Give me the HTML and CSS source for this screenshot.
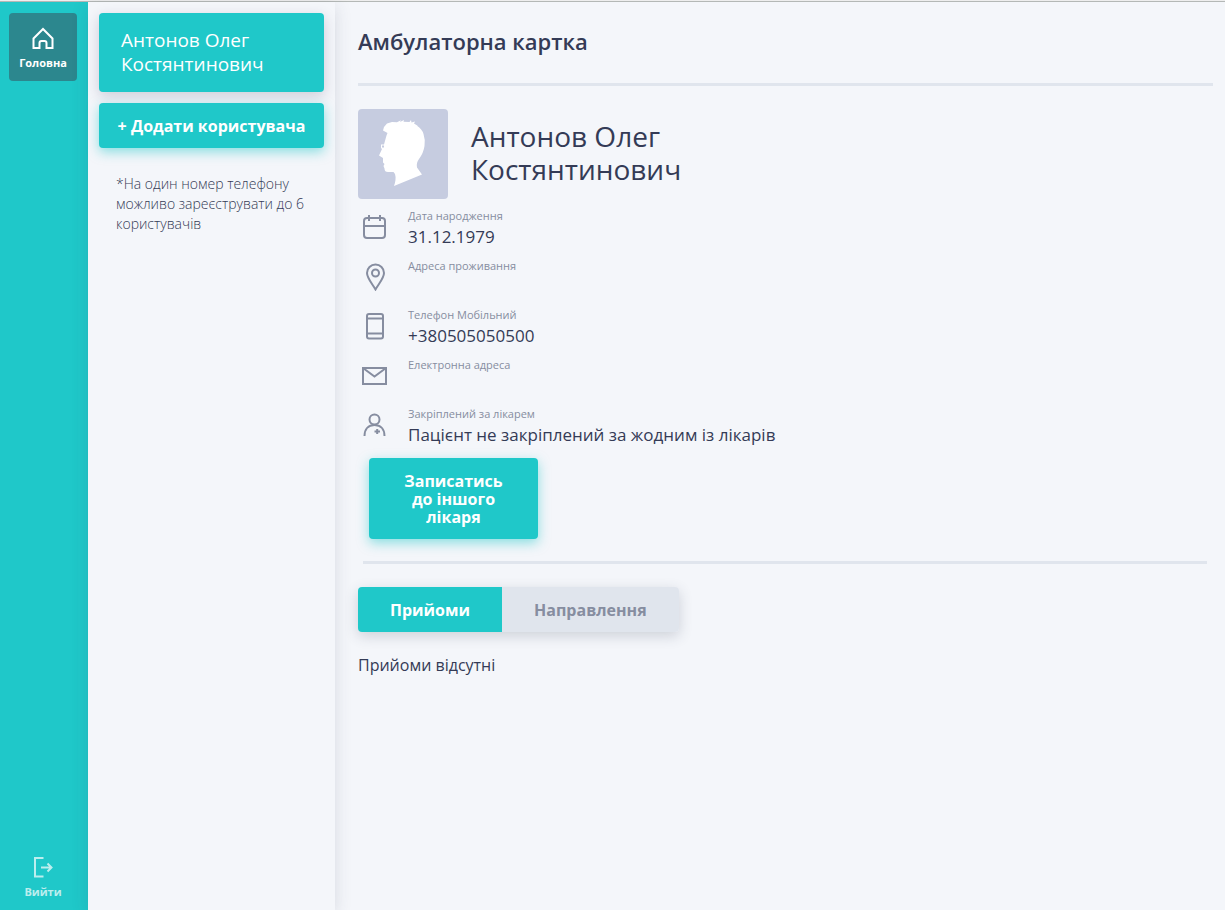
FILE: index.html
```html
<!DOCTYPE html>
<html lang="uk">
<head>
  <meta charset="utf-8">
  <meta name="viewport" content="width=device-width, initial-scale=1">
  <title>Амбулаторна картка</title>
  <link rel="stylesheet" href="styles.css">
</head>
<body>
  <div class="app">
    <nav class="rail">
      <a class="rail-link rail-link--active" href="#home">
        <svg class="rail-icon" viewBox="0 0 24 24" aria-hidden="true"><path d="M2.500 12.500 12 3l9.500 9.500V22H15.500v-5a2 2 0 0 0-2-2h-3a2 2 0 0 0-2 2v5H2.500z"/></svg>
        Головна
      </a>
      <a class="rail-link rail-link--exit" href="#logout">
        <svg class="rail-icon" viewBox="0 0 24 24" aria-hidden="true"><path d="M12.500 3H4v18.500h8.500M10 12.500h10M16.500 8.500l4 4-4 4"/></svg>
        Вийти
      </a>
    </nav>

    <aside class="users">
      <button class="user-card" type="button">Антонов Олег Костянтинович</button>
      <button class="button button--add" type="button">+ Додати користувача</button>
      <p class="note">*На один номер телефону можливо зареєструвати до 6 користувачів</p>
    </aside>

    <main class="card">
      <h1 class="title">Амбулаторна картка</h1>
      <section class="patient">
        <svg class="avatar" viewBox="0 0 90 90" role="img" aria-label="Фото пацієнта">
          <rect width="90" height="90" fill="#c6cce0"/>
          <path fill="#fff" d="M29 14.500 34 13l5 .3 4-2-1 1.700 4-2-.500 1.700 6 .3 1.500-2 .5 2.500 3.500-1-1 2 4 2.500-1-.2Q64 20 65.500 25 67.500 31 66.500 37 65.500 44 61 50 58 54 59 58.500L64 65.500 36 77Q38.500 70 37 65L35.500 63H30Q26.500 63 26.500 59.500L25.500 57 26.500 55 25 53.500V49L21 46.500 24 40 23 39V35.500H26L28.500 26.500 29.500 24 25 21.500 26 18z"/>
          <path fill="#c6cce0" d="M24 36.500h2v2h-2z"/>
        </svg>
        <h2 class="patient-name">Антонов Олег Костянтинович</h2>
      </section>

      <dl class="details">
        <div class="detail">
          <svg class="detail-icon" viewBox="0 0 28 28" aria-hidden="true"><rect x="3" y="5" width="21" height="20" rx="3"/><path d="M3 13h21M8 2v6M19 2v6"/></svg>
          <dt>Дата народження</dt>
          <dd>31.12.1979</dd>
        </div>
        <div class="detail">
          <svg class="detail-icon" viewBox="0 0 28 28" aria-hidden="true"><path d="M14.500 26.500C11 20.500 6 15 6 10a8.500 8.500 0 0 1 17 0c0 5-5 10.500-8.500 16.500z"/><circle cx="14.500" cy="10" r="3.500"/></svg>
          <dt>Адреса проживання</dt>
          <dd></dd>
        </div>
        <div class="detail">
          <svg class="detail-icon" viewBox="0 0 28 28" aria-hidden="true"><rect x="6" y="2" width="16" height="24.500" rx="2"/><path d="M6 6.500h16M6 21.500h16"/></svg>
          <dt>Телефон Мобільний</dt>
          <dd>+380505050500</dd>
        </div>
        <div class="detail">
          <svg class="detail-icon" viewBox="0 0 28 28" aria-hidden="true"><path d="M2 6h23v16H2zM2 6l11.500 8.500L25 6"/></svg>
          <dt>Електронна адреса</dt>
          <dd></dd>
        </div>
        <div class="detail">
          <svg class="detail-icon" viewBox="0 0 28 28" aria-hidden="true"><circle cx="13.500" cy="8.500" r="5"/><path d="M3.500 25c0-7 4-11 10-11s10 4 10 11M13.500 20.500h5.500M16.200 18v5"/></svg>
          <dt>Закріплений за лікарем</dt>
          <dd>Пацієнт не закріплений за жодним із лікарів</dd>
        </div>
      </dl>

      <div class="booking">
        <button class="button button--book" type="button">Записатись до іншого лікаря</button>
      </div>

      <div class="tabs" role="tablist">
        <button class="tab tab--active" type="button" role="tab" aria-selected="true">Прийоми</button>
        <button class="tab" type="button" role="tab" aria-selected="false">Направлення</button>
      </div>
      <p class="empty">Прийоми відсутні</p>
    </main>
  </div>
</body>
</html>
```
FILE: styles.css
```css
* {
  box-sizing: border-box;
}

body,
h1,
h2,
p,
dl,
dd {
  margin: 0;
}

body {
  background: #f4f6fa;
  color: #343b56;
  font-family: "Open Sans", "Noto Sans", sans-serif;
}

button {
  border: 0;
  font-family: inherit;
  cursor: pointer;
}

.app {
  display: flex;
  min-height: 100vh;
  padding-top: 2px;
  background: linear-gradient(#eeeeee 1px, #b4b8b6 1px, #b4b8b6 2px, #f4f6fa 2px);
}

.rail {
  display: flex;
  flex-direction: column;
  justify-content: space-between;
  align-items: flex-start;
  flex: 0 0 88px;
  padding: 11px 9px 0;
  background: #1fc8c9;
}

.rail-link {
  display: flex;
  flex-direction: column;
  align-items: center;
  justify-content: center;
  gap: 5px;
  width: 68px;
  height: 68px;
  padding-top: 2px;
  border-radius: 4px;
  color: #fff;
  font-size: 11px;
  font-weight: 700;
  line-height: 16px;
  text-decoration: none;
}

.rail-link--active {
  background: #2c878e;
}

.rail-link--exit {
  opacity: 0.7;
}

.rail-icon {
  width: 24px;
  height: 24px;
  fill: none;
  stroke: currentColor;
  stroke-width: 2;
}

.users {
  display: flex;
  flex-direction: column;
  flex: 0 0 247px;
  gap: 11px;
  padding: 11px;
  box-shadow: 0 4px 16px rgba(52, 59, 86, 0.15);
}

.user-card {
  padding: 15px 22px 16px;
  border-radius: 4px;
  background: #1fc8c9;
  box-shadow: 0 4px 14px rgba(52, 40, 86, 0.2);
  color: #fff;
  font-size: 19px;
  line-height: 24px;
  text-align: left;
}

.button {
  border-radius: 4px;
  background: #1fc8c9;
  box-shadow: 0 4px 12px rgba(31, 200, 201, 0.5);
  color: #fff;
  font-size: 16px;
  font-weight: 700;
  line-height: 18px;
}

.button--add {
  height: 45px;
  padding: 0 8px;
}

.note {
  padding: 15px 17px;
  font-size: 14px;
  font-weight: 300;
  line-height: 20px;
}

.card {
  flex: 1;
  min-width: 0;
  padding: 0 12px 24px 23px;
}

.title {
  padding: 23px 0 26px;
  border-bottom: 3px solid #e0e5ed;
  font-size: 22px;
  font-weight: 600;
  line-height: 32px;
}

.patient {
  display: flex;
  align-items: center;
  gap: 23px;
  margin-top: 23px;
}

.avatar {
  flex: none;
  width: 90px;
  height: 90px;
  border-radius: 4px;
}

.patient-name {
  max-width: 260px;
  padding-bottom: 2px;
  font-size: 28px;
  font-weight: 400;
  line-height: 33px;
}

.details {
  display: grid;
  grid-auto-rows: 1fr;
  min-height: 248px;
  padding: 0 3px;
  margin-top: 8px;
}

.detail {
  display: grid;
  grid-template-columns: 28px 1fr;
  grid-template-rows: 18px 24px;
  column-gap: 19px;
}

.detail-icon {
  grid-row: 1 / 3;
  margin-top: 6px;
  width: 28px;
  height: 28px;
  fill: none;
  stroke: #868da0;
  stroke-width: 2;
}

.detail dt {
  color: #868da0;
  font-size: 11px;
  line-height: 18px;
}

.detail dd {
  font-size: 17px;
  line-height: 24px;
}

.booking {
  margin: 0 6px 0 5px;
  padding: 3px 6px 22px;
  border-bottom: 3px solid #e0e5ed;
}

.button--book {
  width: 169px;
  padding: 14px 32px 13px;
}

.tabs {
  display: inline-flex;
  margin-top: 23px;
  border-radius: 4px;
  overflow: hidden;
  box-shadow: 0 4px 14px rgba(52, 59, 86, 0.2);
}

.tab {
  height: 45px;
  padding: 0 32px;
  background: #e0e5ed;
  color: #868da0;
  font-size: 16px;
  font-weight: 700;
}

.tab--active {
  background: #1fc8c9;
  color: #fff;
}

.empty {
  margin-top: 21px;
  font-size: 16px;
  line-height: 24px;
}
```
